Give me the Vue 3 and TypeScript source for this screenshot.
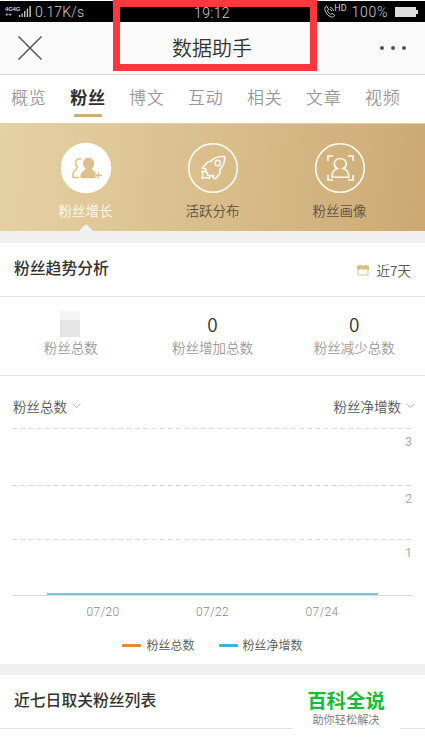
<script setup lang="ts">
interface Stat { label: string; value: string; masked?: boolean }

const tabs: string[] = ['概览', '粉丝', '博文', '互动', '相关', '文章', '视频']
const activeTab = '粉丝'
const stats: Stat[] = [
  { label: '粉丝总数', value: '', masked: true },
  { label: '粉丝增加总数', value: '0' },
  { label: '粉丝减少总数', value: '0' },
]
const levels: number[] = [3, 2, 1]
const dates: string[] = ['07/20', '07/22', '07/24']
</script>

<template>
  <div class="screen">
    <div class="status">
      <div class="status-left">
        <span class="net"><span>4G4G</span><span>++</span></span>
        <svg class="signal" width="12" height="11" viewBox="0 0 12 11" fill="#c4c4c4">
          <path d="M0 9h1.300v2H0zM2.500 7.500h1.300V11H2.500zM5 5h1.400v6H5zM7.700 2.500h1.400V11H7.700zM10.400 0h1.500v11h-1.500z" />
        </svg>
        <span class="speed">0.17K/s</span>
      </div>
      <span class="clock">19:12</span>
      <div class="status-right">
        <svg width="12" height="13" viewBox="0 0 12 13" fill="none" stroke="#c4c4c4">
          <path d="M2.500 1C.5 2 .4 4 1.400 6.300c1.300 2.800 3.300 5 5.600 5.700 1.800.5 3-.5 3.600-1.800L8 8.300 6.700 9.500C5 8.600 4 7 3.400 5.500L4.800 4.500zM6 2.500c2 .2 3.300 1.500 3.500 3.500M6 4.500c1 .2 1.500.7 1.700 1.700" />
        </svg>
        <span class="hd">HD</span>
        <span class="percent">100%</span>
        <svg class="battery" width="24" height="12" viewBox="0 0 24 12" fill="#dedede"><path d="M0 1h21v3h2v4h-2v3H0z" /></svg>
      </div>
    </div>

    <header class="nav">
      <svg width="26" height="26" viewBox="0 0 26 26" fill="none" stroke="#555" stroke-width="1.500"><path d="M1.500 1.500l23 23M24.500 1.500l-23 23" /></svg>
      <h1>数据助手</h1>
      <svg width="28" height="6" viewBox="0 0 28 6" fill="#555"><circle cx="3" cy="3" r="2" /><circle cx="14" cy="3" r="2" /><circle cx="25" cy="3" r="2" /></svg>
    </header>

    <nav class="tabs">
      <span v-for="tab in tabs" :key="tab" class="tab" :class="{ active: tab === activeTab }">{{ tab }}</span>
    </nav>

    <section class="banner">
      <div class="feature selected">
        <svg width="52" height="52" viewBox="0 0 52 52">
          <circle cx="26" cy="26" r="25.300" fill="#fff" />
          <path d="M21.500 17c-4-1-6.500 1.500-5.700 5.100.2 1.300.7 2.200 1.600 3-.1 2.400-4.400 3.300-4.400 7.200v3.200h6" fill="none" stroke="#dcc08b" stroke-width="1.600" />
          <path d="M28.500 15.700c3.500 0 5.700 2.500 5.700 5.800 0 2.100-1 3.800-2.300 4.900.4 2.800 5.100 2.600 5.100 7.700v2.200H20.500v-2.200c0-5 4.600-4.900 5-7.700-1.400-1.100-2.500-2.800-2.500-4.900 0-3.300 2.100-5.800 5.500-5.800z" fill="#dcc08b" />
          <path d="M35.300 33.300h6.500M38.500 30V36.500" stroke="#fff" stroke-width="3.200" />
          <path d="M35.300 33.300h6.500M38.500 30V36.500" stroke="#dcc08b" stroke-width="1.400" />
        </svg>
        <span>粉丝增长</span>
      </div>
      <div class="feature">
        <svg width="52" height="52" viewBox="0 0 52 52" fill="none" stroke="#fffaf0" stroke-width="1.600" stroke-linejoin="round">
          <circle cx="26" cy="26" r="24.300" />
          <path d="M37.800 14.500c-6.500-.4-10.800 1-13.800 4.500l-3.500 1.200-5.300 6 3.500.8v2.500M37.800 14.500c0 5.500-1.300 9.700-4.800 12.700v4l-4.500 5.500-2.300-.7.300-2.500-3.700.2" />
          <circle cx="30.800" cy="21" r="2.700" />
          <path d="M18.700 29.500l-3.700-.3.800 3-.8 4 4-.7 3.500.8.300-2.800-2.600-.2.200-2.500z" />
        </svg>
        <span>活跃分布</span>
      </div>
      <div class="feature">
        <svg width="52" height="52" viewBox="0 0 52 52" fill="none" stroke="#fffaf0" stroke-width="1.600">
          <circle cx="26" cy="26" r="24.300" />
          <path d="M14 19v-5h5M34 14h5v5M14 33v5h5M34 38h5v-5" />
          <path d="M23.300 26.500c-2-1-3-2.700-3-4.500 0-3.300 2.600-5.500 6-5.500s6 2.200 6 5.500c0 1.800-1 3.500-3 4.500 3.500 1 5.500 4 5.500 8.700H18c0-4.700 2-7.700 5.300-8.700z" />
        </svg>
        <span>粉丝画像</span>
      </div>
    </section>

    <section class="heading trend">
      <h2>粉丝趋势分析</h2>
      <div class="period">
        <svg width="12" height="12" viewBox="0 0 12 12"><path d="M1 2h10v9H1z" fill="none" stroke="#dfc58b" /><path d="M0 2h12v3.500H0z" fill="#d9bc6c" /><path d="M3 1v2M9 1v2" stroke="#c5a655" /><path d="M3 4h1M6 4h1M9 4h1" stroke="#f7edcf" /></svg>
        <span>近7天</span>
      </div>
    </section>

    <section class="stats">
      <div v-for="item in stats" :key="item.label" class="stat">
        <div v-if="item.masked" class="mask" />
        <strong v-else>{{ item.value }}</strong>
        <span>{{ item.label }}</span>
      </div>
    </section>

    <section class="chart">
      <div class="selectors">
        <span>粉丝总数<svg width="9" height="6" viewBox="0 0 9 6" fill="none" stroke="#b0b0b0"><path d="M.5.700l4 4 4-4" /></svg></span>
        <span>粉丝净增数<svg width="9" height="6" viewBox="0 0 9 6" fill="none" stroke="#b0b0b0"><path d="M.5.700l4 4 4-4" /></svg></span>
      </div>
      <div class="plot">
        <div v-for="level in levels" :key="level" class="level">
          <svg width="401" height="1" viewBox="0 0 401 1"><path d="M0 .5h401" stroke="#dadada" stroke-dasharray="5 3.200" /></svg>
          <span>{{ level }}</span>
        </div>
      </div>
      <svg class="series" width="401" height="4" viewBox="0 0 401 4"><path d="M0 2.500h401" stroke="#d9d9d9" /><path d="M35 1h331" stroke="#78c4d8" stroke-width="2" /></svg>
      <div class="dates"><span v-for="date in dates" :key="date">{{ date }}</span></div>
      <div class="legend">
        <div><i class="total" /><span>粉丝总数</span></div>
        <div><i class="net-gain" /><span>粉丝净增数</span></div>
      </div>
    </section>

    <section class="heading list"><h2>近七日取关粉丝列表</h2></section>

    <div class="title-frame" />
    <div class="watermark"><strong>百科全说</strong><span>助你轻松解决</span></div>
  </div>
</template>

<style>
body { margin: 0; overflow: hidden; background: #fff; }
</style>

<style scoped>
* { box-sizing: border-box; }
.screen { position: relative; width: 425px; height: 756px; overflow: hidden; background: #fff; font-family: "Noto Sans CJK SC", sans-serif; font-weight: 350; color: #555; }
svg { display: block; flex: none; }
h1, h2 { margin: 0; }
.status { height: 21px; margin-top: 1px; padding: 0 6px 0 5px; background: #000; color: #d0d0d0; display: grid; grid-template-columns: 1fr auto 1fr; align-items: center; font-family: Roboto, sans-serif; font-weight: 300; font-size: 14px; }
.status-left, .status-right { display: flex; align-items: center; }
.status-right { justify-content: flex-end; }
.net { display: flex; flex-direction: column; width: 14px; font: 700 6px/5px "Liberation Sans", sans-serif; }
.net span { letter-spacing: -.2px; }
.signal { margin: 0 4px 0 0; }
.speed { letter-spacing: .15px; }
.clock { padding-top: 2px; letter-spacing: .4px; }
.hd { font-size: 9px; line-height: 9px; align-self: flex-start; margin-left: -2px; font-weight: 400; }
.percent { margin: 0 7px 0 5px; letter-spacing: .7px; }
.nav { height: 53px; padding: 0 18px 0 17px; border-bottom: 1px solid #d5d5d5; background: #fafafa; display: flex; justify-content: space-between; align-items: center; }
.nav h1 { font-size: 20px; line-height: 28px; font-weight: 350; color: #333; padding: 0 0 1px 2px; }
.tabs { height: 48px; padding: 7px 24px 0 11px; display: flex; justify-content: space-between; font-size: 17px; line-height: 30px; color: #999; }
.tab { width: 36px; height: 36px; white-space: nowrap; letter-spacing: .8px; }
.tab.active { color: #303030; font-weight: 700; display: flex; flex-direction: column; align-items: center; }
.tab.active::after { content: ""; width: 28px; height: 3px; margin-top: 2px; background: #cab26d; flex: none; }
.banner { height: 108px; padding: 18px 22px 0; background: linear-gradient(96deg, #e6d1a4, #d9be8c 50%, #cca973); border-top: 1px solid #e4d0a8; display: grid; grid-template-columns: repeat(3, 1fr); }
.feature { position: relative; display: flex; flex-direction: column; align-items: center; font-size: 13.500px; line-height: 20px; color: #5c5140; }
.feature span { margin-top: 6px; }
.feature.selected { color: #fffaf0; }
.feature.selected::after { content: ""; position: absolute; bottom: 0; border: 7px solid transparent; border-top: 0; border-bottom-color: #f3f3f3; }
.heading { display: flex; justify-content: space-between; border-top: 12px solid #f0f0f0; border-bottom: 1px solid #e5e5e5; padding-left: 14px; }
.heading h2 { font-size: 15.800px; line-height: 24px; font-weight: 500; color: #333; }
.trend { height: 66px; padding-right: 14px; padding-top: 13px; }
.period { display: flex; align-items: center; gap: 8px; height: 28px; font-size: 13.500px; color: #555; }
.stats { height: 79px; border-bottom: 1px solid #e4e4e4; display: grid; grid-template-columns: repeat(3, 1fr); }
.stat { display: flex; flex-direction: column; align-items: center; padding-top: 14px; font-size: 13.500px; line-height: 20px; color: #999; }
.stat strong { font-size: 19px; line-height: 26px; height: 26px; font-weight: 350; color: #333; }
.mask { width: 20px; height: 26px; margin-right: 1px; background: linear-gradient(#f5f5f5 9px, #e5e5e5 9px); }
.chart { height: 288px; padding: 20px 12px 0; }
.selectors { display: flex; justify-content: space-between; margin-right: -2px; padding-left: 1px; font-size: 13.500px; line-height: 20px; color: #555; }
.selectors span { display: flex; align-items: center; gap: 5px; }
.plot { display: grid; grid-template-rows: 57px 54px 55px; margin-top: 12px; }
.level { display: flex; flex-direction: column; font: 400 12px/16px Roboto, sans-serif; color: #aaa; }
.level span { align-self: flex-end; margin-top: 5px; padding-right: 1px; }
.series { margin-top: -1px; }
.dates { display: grid; grid-template-columns: repeat(3, 109.500px); justify-content: center; margin-top: 6px; font: 300 12px/18px Roboto, sans-serif; letter-spacing: .3px; color: #888; text-align: center; }
.legend { display: flex; justify-content: center; gap: 24px; margin-top: 15px; font-size: 12px; line-height: 18px; color: #555; }
.legend div { display: flex; align-items: center; gap: 5px; }
.legend i { width: 19px; height: 3px; border-radius: 1px; }
.total { background: #e38a38; }
.net-gain { background: #39b3d9; }
.list { height: 65px; padding-top: 13px; border-top-width: 11px; }
.title-frame { position: absolute; left: 113px; top: 0; width: 204px; height: 71px; border: 7px solid #fa383d; }
.watermark { position: absolute; left: 293px; top: 685px; width: 107px; height: 49px; background: #fff; display: flex; flex-direction: column; align-items: center; padding: 3px 1px 0 0; font-size: 11.200px; line-height: 17px; color: #777; }
.watermark strong { font-size: 19.400px; line-height: 23px; color: #12bd38; font-weight: 700; }
</style>
